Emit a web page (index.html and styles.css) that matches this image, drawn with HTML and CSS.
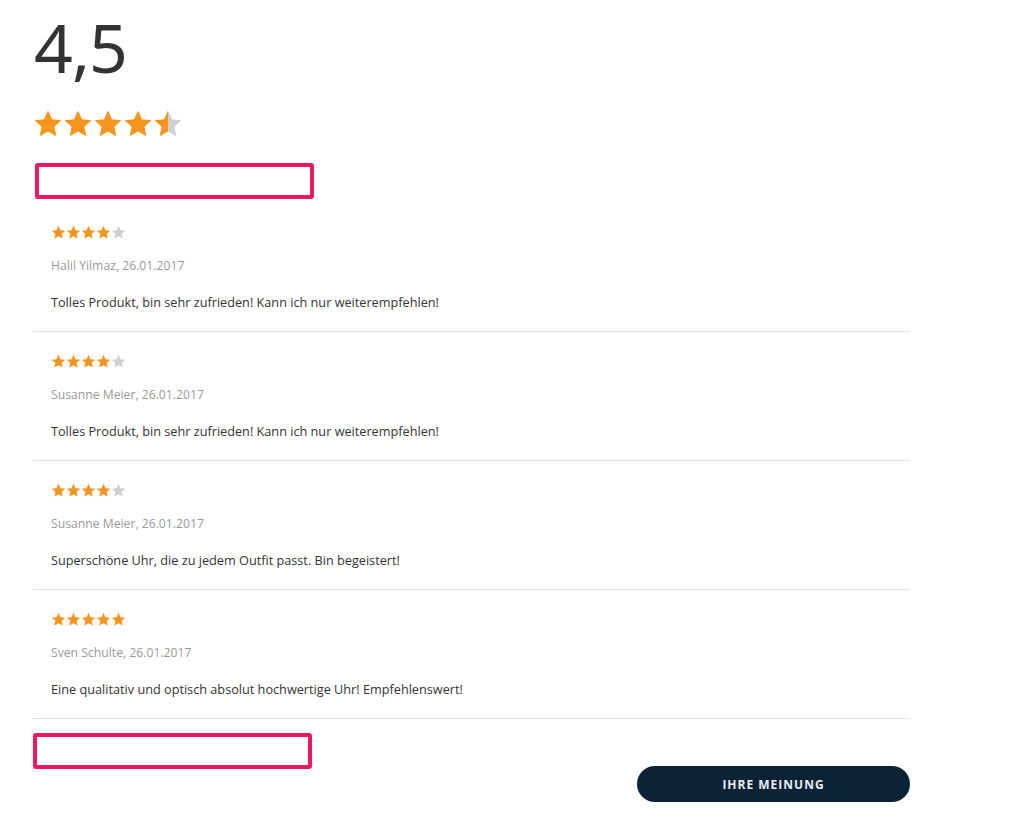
FILE: index.html
```html
<!DOCTYPE html>
<html lang="de">
<head>
<meta charset="utf-8">
<link rel="stylesheet" href="styles.css">
<title>Bewertungen</title>
</head>
<body>
<svg width="0" height="0" class="defs">
  <defs>
    <symbol id="star" viewBox="0 0 24 24"><polygon points="12,1.2 15.2,8.2 22.8,9 17.1,14.1 18.7,21.7 12,17.9 5.3,21.7 6.9,14.1 1.2,9 8.8,8.2"/></symbol>
    <linearGradient id="half" x1="0" x2="1" y1="0" y2="0">
      <stop offset="50%" stop-color="#f7941d"/>
      <stop offset="50%" stop-color="#cfd0d4"/>
    </linearGradient>
  </defs>
</svg>
<main class="page">
  <div class="score">4,5</div>
  <div class="stars stars-big">
    <svg class="on"><use href="#star"/></svg>
    <svg class="on"><use href="#star"/></svg>
    <svg class="on"><use href="#star"/></svg>
    <svg class="on"><use href="#star"/></svg>
    <svg class="halfstar"><use href="#star"/></svg>
  </div>
  <div class="mark mark-top"></div>

  <ul class="reviews">
    <li class="review">
      <div class="stars stars-small">
        <svg class="on"><use href="#star"/></svg><svg class="on"><use href="#star"/></svg><svg class="on"><use href="#star"/></svg><svg class="on"><use href="#star"/></svg><svg class="off"><use href="#star"/></svg>
      </div>
      <div class="author">Halil Yilmaz, 26.01.2017</div>
      <p class="text">Tolles Produkt, bin sehr zufrieden! Kann ich nur weiterempfehlen!</p>
    </li>
    <li class="review">
      <div class="stars stars-small">
        <svg class="on"><use href="#star"/></svg><svg class="on"><use href="#star"/></svg><svg class="on"><use href="#star"/></svg><svg class="on"><use href="#star"/></svg><svg class="off"><use href="#star"/></svg>
      </div>
      <div class="author">Susanne Meier, 26.01.2017</div>
      <p class="text">Tolles Produkt, bin sehr zufrieden! Kann ich nur weiterempfehlen!</p>
    </li>
    <li class="review">
      <div class="stars stars-small">
        <svg class="on"><use href="#star"/></svg><svg class="on"><use href="#star"/></svg><svg class="on"><use href="#star"/></svg><svg class="on"><use href="#star"/></svg><svg class="off"><use href="#star"/></svg>
      </div>
      <div class="author">Susanne Meier, 26.01.2017</div>
      <p class="text">Superschöne Uhr, die zu jedem Outfit passt. Bin begeistert!</p>
    </li>
    <li class="review">
      <div class="stars stars-small">
        <svg class="on"><use href="#star"/></svg><svg class="on"><use href="#star"/></svg><svg class="on"><use href="#star"/></svg><svg class="on"><use href="#star"/></svg><svg class="on"><use href="#star"/></svg>
      </div>
      <div class="author">Sven Schulte, 26.01.2017</div>
      <p class="text">Eine qualitativ und optisch absolut hochwertige Uhr! Empfehlenswert!</p>
    </li>
  </ul>

  <div class="footer">
    <div class="mark mark-bottom"></div>
    <button class="btn" type="button">IHRE MEINUNG</button>
  </div>
</main>
</body>
</html>
```
FILE: styles.css
```css
* { box-sizing: border-box; }
html, body { margin: 0; padding: 0; background: #fff; }
body { font-family: "Open Sans", "Noto Sans", sans-serif; color: #333; }
.defs { position: absolute; width: 0; height: 0; overflow: hidden; }

.page {
  width: 910px;
  padding: 13px 0 0 33px;
}

.score {
  font-family: "Noto Sans", "Open Sans", sans-serif;
  font-size: 68px;
  line-height: 68px;
  color: #333;
  padding-left: 1px;
  letter-spacing: -1px;
}

.stars { display: flex; }
.stars svg { fill: #f7941d; }
.stars .off { fill: #cfd0d4; }
.stars .halfstar { fill: url(#half); }

.stars-big { margin-top: 28px; height: 30px; }
.stars-big svg { width: 30px; height: 30px; }

.mark {
  border: 4px solid #ee1763;
  border-radius: 3px;
  background: #fff;
  width: 279px;
  height: 36px;
}
.mark-top { margin: 24px 0 0 2px; }

.reviews { list-style: none; margin: 4px 0 0; padding: 0; }
.review {
  height: 129px;
  border-bottom: 1px solid #e1e1e1;
  padding: 22px 0 0 18px;
}
.stars-small { height: 15px; }
.stars-small svg { width: 15px; height: 15px; }

.author {
  margin-top: 18px;
  font-size: 12.2px;
  line-height: 16px;
  color: #999;
}
.text {
  margin: 20px 0 0;
  font-size: 12.7px;
  line-height: 16px;
  color: #333;
}

.footer {
  display: flex;
  justify-content: space-between;
  align-items: flex-start;
}
.mark-bottom { margin-top: 14px; }
.btn {
  margin-top: 47px;
  width: 273px;
  height: 36px;
  border: none;
  border-radius: 18px;
  background: #0c2335;
  color: #e8edf2;
  font-family: "Open Sans", sans-serif;
  font-weight: 700;
  font-size: 12px;
  letter-spacing: 1px;
}
```
